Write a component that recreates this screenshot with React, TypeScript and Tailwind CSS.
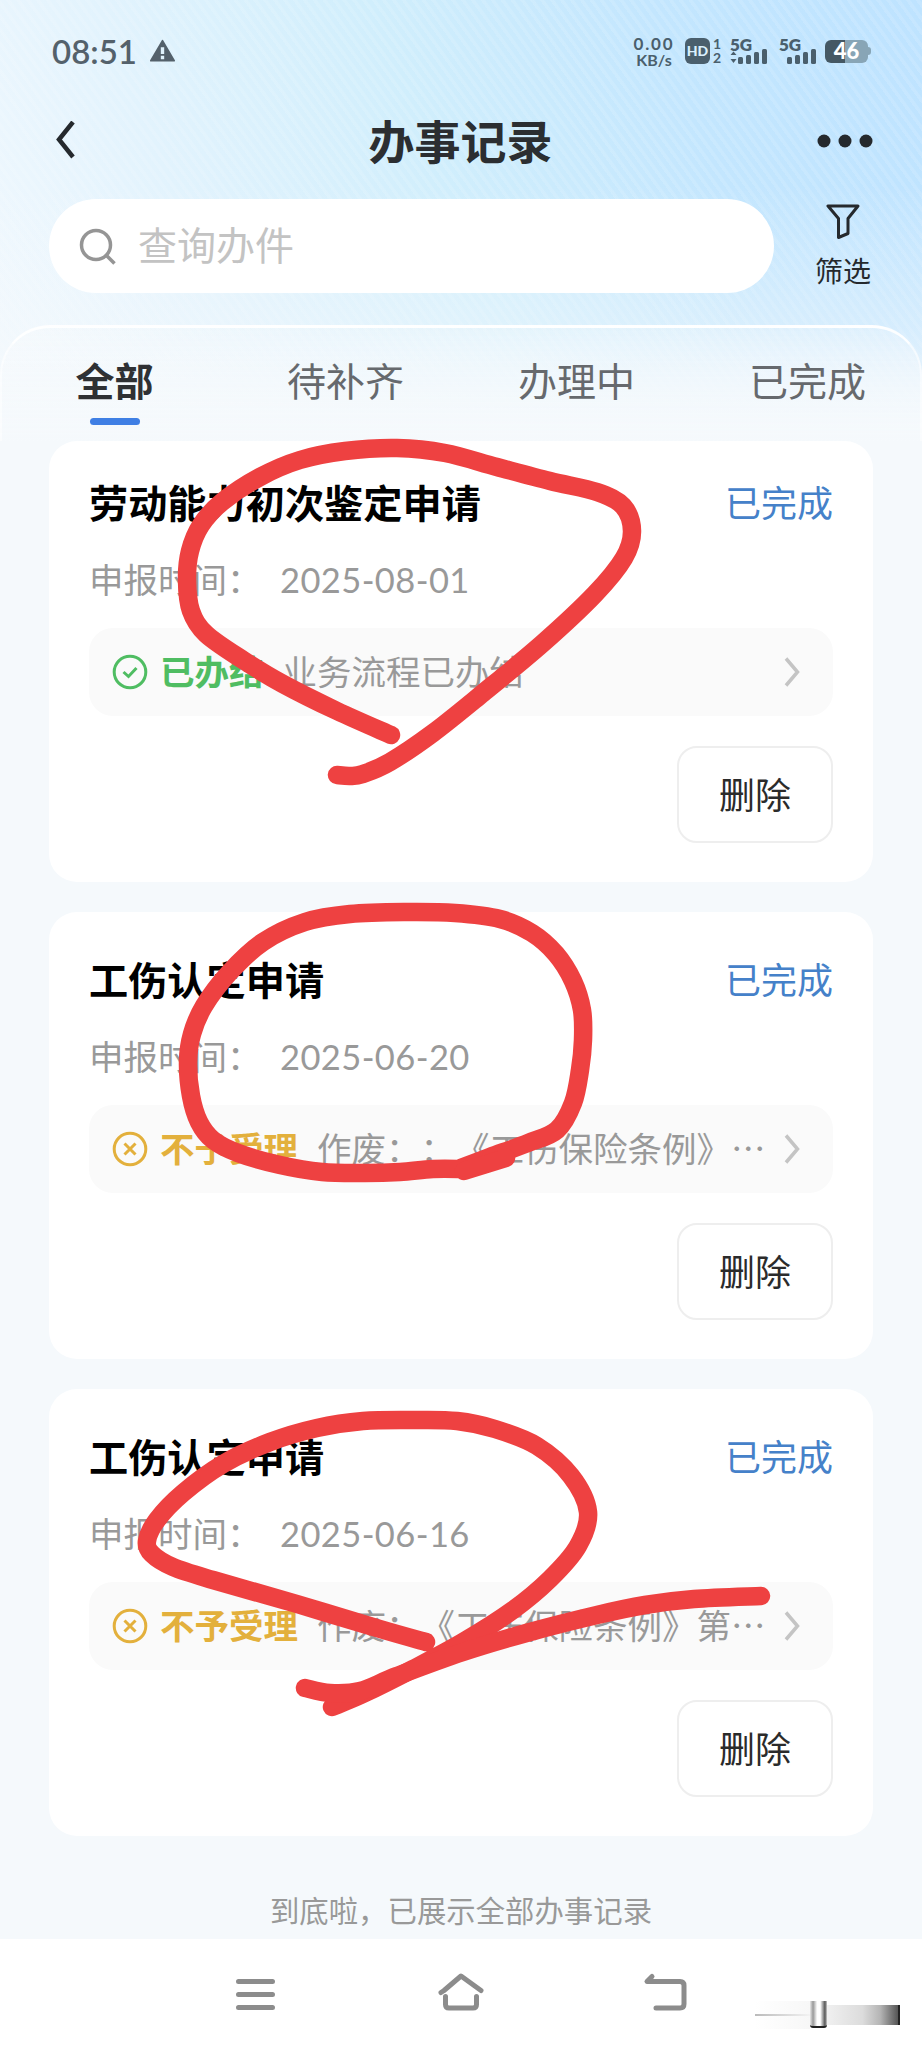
import { ReactNode } from 'react';

type Point = [number, number];

interface ServiceRecord {
  id: number;
  title: string;
  date: string;
  result: 'done' | 'rejected';
  resultText: string;
  detail: string;
}

const TABS = ['全部', '待补齐', '办理中', '已完成'];

const RECORDS: ServiceRecord[] = [
  { id: 1, title: '劳动能力初次鉴定申请', date: '2025-08-01', result: 'done', resultText: '已办结', detail: '业务流程已办结' },
  { id: 2, title: '工伤认定申请', date: '2025-06-20', result: 'rejected', resultText: '不予受理', detail: '作废：：《工伤保险条例》…' },
  { id: 3, title: '工伤认定申请', date: '2025-06-16', result: 'rejected', resultText: '不予受理', detail: '作废：《工伤保险条例》第…' },
];

const STROKES: Point[][] = [
  [
    [391, 735], [337, 711], [283, 684], [243, 660], [206, 634], [191, 611], [187, 580], [190, 551], [201, 525],
    [222, 502], [260, 477], [300, 460], [345, 451], [397, 448], [445, 453], [497, 467], [550, 481], [597, 492],
    [623, 506], [632, 531], [624, 558], [595, 594], [543, 643], [483, 693], [433, 733], [390, 762], [363, 774],
    [350, 776], [337, 775],
  ],
  [
    [464, 1169], [433, 1169], [400, 1172], [365, 1173], [322, 1172], [280, 1165], [238, 1153], [213, 1140], [199, 1122],
    [191, 1096], [188, 1062], [192, 1034], [204, 1006], [229, 973], [263, 942], [305, 922], [350, 914], [405, 912],
    [455, 913], [500, 919], [532, 933], [556, 954], [573, 981], [582, 1010], [583, 1040], [580, 1070], [573, 1103],
    [557, 1130], [528, 1143], [490, 1157], [461, 1168],
  ],
  [[506, 1158], [464, 1171]],
  [
    [426, 1642], [380, 1629], [297, 1604], [213, 1580], [173, 1567], [152, 1554], [147, 1541], [157, 1520], [183, 1493],
    [223, 1464], [270, 1442], [317, 1428], [363, 1421], [413, 1420], [457, 1421], [495, 1429], [537, 1446], [571, 1476],
    [588, 1512], [578, 1546], [550, 1579], [513, 1610], [463, 1642], [413, 1669], [363, 1694], [332, 1707],
  ],
  [[305, 1688], [330, 1693], [360, 1691], [397, 1676], [463, 1652], [530, 1632], [597, 1615], [645, 1605], [694, 1599], [761, 1596]],
];

// Catmull-Rom through every point, so a freehand line stays round
function smoothPath(pts: Point[]): string {
  let d = `M${pts[0][0]} ${pts[0][1]}`;
  for (let i = 0; i < pts.length - 1; i++) {
    const p0 = pts[i - 1] || pts[i];
    const p1 = pts[i];
    const p2 = pts[i + 1];
    const p3 = pts[i + 2] || p2;
    d += ` C${p1[0] + (p2[0] - p0[0]) / 6} ${p1[1] + (p2[1] - p0[1]) / 6} ${p2[0] - (p3[0] - p1[0]) / 6} ${p2[1] - (p3[1] - p1[1]) / 6} ${p2[0]} ${p2[1]}`;
  }
  return d;
}

function SignalBars({ arrows }: { arrows?: boolean }) {
  return (
    <svg className="w-[40px] h-[40px] shrink-0" viewBox="-1 -6 40 40" fill="#4a5f6d">
      <text x="0" y="13.500" fontSize="17" fontWeight="800" className="font-['Lato']">5G</text>
      {arrows && <path d="M0.500 18h6L3.500 14.500zM0.500 22h6L3.500 26z" />}
      <rect x="8" y="20" width="5" height="7" rx="1.500" />
      <rect x="16" y="18" width="5" height="9" rx="1.500" />
      <rect x="24" y="15" width="5" height="12" rx="1.500" />
      <rect x="32" y="12" width="5" height="15" rx="1.500" />
    </svg>
  );
}

function StatusBar() {
  return (
    <div className="h-[102px] pl-[52px] pr-[51px] flex items-center justify-between text-[#4a5f6d] font-['Lato','Noto_Sans_CJK_SC',sans-serif]">
      <div className="flex items-center gap-[12px]">
        <span className="text-[33px] leading-none font-semibold text-[#54616b]">08:51</span>
        <svg className="w-[27px] h-[24px]" viewBox="0 0 28 24">
          <path d="M14 1.500L26 22H2z" fill="#54616b" stroke="#54616b" strokeWidth="2" strokeLinejoin="round" />
          <path d="M14 8v7M14 17v3.500" stroke="#e0f2fc" strokeWidth="3.500" />
        </svg>
      </div>
      <div className="flex items-center">
        <div className="w-[44px] flex flex-col items-center font-bold">
          <span className="text-[17px] leading-[17px] tracking-[1.800px]">0.00</span>
          <span className="text-[16px] leading-[16px]">KB/s</span>
        </div>
        <div className="ml-[9px] w-[25px] h-[26px] rounded-[6px] bg-[#4a5f6d] text-[#d9effd] text-[14px] leading-none font-black flex items-center justify-center">HD</div>
        <div className="ml-[2px] w-[10px] flex flex-col items-center text-[14px] leading-[14px] font-bold">
          <span>1</span>
          <span>2</span>
        </div>
        <div className="ml-[7px] flex gap-[9px]">
          <SignalBars arrows />
          <SignalBars />
        </div>
        <div className="ml-[7px] flex items-center">
          <div className="w-[43px] h-[23px] rounded-[6px] bg-linear-to-r from-[#455864] from-46% to-[#88a5b6] to-46% text-white text-[22px] leading-none font-black flex items-center justify-center">46</div>
          <div className="w-[3px] h-[8px] rounded-r-sm bg-[#88a5b6]" />
        </div>
      </div>
    </div>
  );
}

function TitleBar() {
  return (
    <div className="h-[78px] pl-[54px] pr-[49px] flex items-center justify-between text-[#25292d]">
      <svg className="w-[50px] h-[40px]" viewBox="0 0 50 40" fill="none" stroke="currentColor" strokeWidth="4.500">
        <path d="M19 1L5 18.500L19 36" />
      </svg>
      <h1 className="pb-[5px] text-[46px] leading-none font-bold text-[#2b2e31]">办事记录</h1>
      <svg className="w-[56px] h-[14px]" viewBox="0 0 56 14" fill="currentColor">
        <circle cx="7" cy="7" r="6.500" />
        <circle cx="28" cy="7" r="6.500" />
        <circle cx="49" cy="7" r="6.500" />
      </svg>
    </div>
  );
}

function SearchRow() {
  return (
    <div className="mt-[19px] pl-[49px] pr-[49px] flex justify-between">
      <div className="w-[725px] h-[94px] rounded-full bg-white pl-[30px] flex items-center">
        <svg className="w-[37px] h-[37px]" viewBox="0 0 37 37" fill="none" stroke="#959595" strokeWidth="3.500">
          <circle cx="17" cy="17" r="14.500" />
          <path d="M26.500 26.500L35.500 35.500" />
        </svg>
        <span className="ml-[22px] pb-[5px] text-[39px] leading-none text-[#c3c3c3]">查询办件</span>
      </div>
      <button className="w-[60px] flex flex-col items-center pt-[5px] text-[#25292d]">
        <svg className="w-[34px] h-[36px]" viewBox="0 0 34 36" fill="none" stroke="currentColor" strokeWidth="3" strokeLinejoin="round">
          <path d="M2 2H32L22 14.500V29.500L12.500 33.500V14.500Z" />
        </svg>
        <span className="mt-[16px] text-[28px] leading-none whitespace-nowrap">筛选</span>
      </button>
    </div>
  );
}

function ResultIcon({ result }: { result: ServiceRecord['result'] }) {
  return (
    <svg className="w-[36px] h-[36px] shrink-0" viewBox="0 0 36 36" fill="none" stroke="currentColor" strokeWidth="3">
      <circle cx="18" cy="18" r="15.800" />
      {result === 'done' ? <path d="M11.500 18L16.500 22.500L24.500 14" /> : <path d="M12.500 12.500L23.500 23.500M23.500 12.500L12.500 23.500" />}
    </svg>
  );
}

function RecordCard({ record, first }: { record: ServiceRecord; first: boolean }) {
  return (
    <div className={`bg-white rounded-[28px] px-[40px] pb-[39px] ${first ? 'pt-[37px]' : 'pt-[43px]'}`}>
      <div className="h-[50px] pb-[3px] flex items-center justify-between">
        <h2 className="text-[39.200px] leading-none font-bold text-black">{record.title}</h2>
        <span className="pb-px text-[36px] leading-none text-[#4581c9]">已完成</span>
      </div>
      <div className="mt-[27px] h-[50px] flex items-center text-[34.500px] leading-none text-[#999]">
        <span className="w-[191px] pb-[3px] whitespace-nowrap">申报时间：</span>
        <span className="font-['Lato'] tracking-[0.400px]">{record.date}</span>
      </div>
      <div className="mt-[23px] h-[88px] rounded-[24px] bg-[#fafafa] pl-[23px] pr-[32px] flex items-center text-[34.500px] leading-none whitespace-nowrap">
        <div className={`flex items-center gap-[12px] ${record.result === 'done' ? 'text-[#4fbd62]' : 'text-[#e3b03c]'}`}>
          <ResultIcon result={record.result} />
          <span className="pb-[4px] font-bold">{record.resultText}</span>
        </div>
        <span className="ml-[19px] pb-[4px] text-[#999] [text-spacing-trim:space-all]">{record.detail}</span>
        <svg className="ml-auto w-[18px] h-[30px] shrink-0" viewBox="0 0 18 30" fill="none" stroke="#c4c4c4" strokeWidth="3.500">
          <path d="M3 1.500L14.500 15L3 28.500" />
        </svg>
      </div>
      <div className="mt-[30px] flex justify-end">
        <button className="w-[156px] h-[97px] pb-[4px] rounded-[20px] border-2 border-[#eee] text-[36px] leading-none text-[#2b2b2b]">删除</button>
      </div>
    </div>
  );
}

function NavIcon({ children }: { children: ReactNode }) {
  return (
    <svg className="w-[52px] h-[40px]" viewBox="0 0 52 40" fill="none" stroke="#8c8c8c" strokeWidth="5" strokeLinecap="round" strokeLinejoin="round">
      {children}
    </svg>
  );
}

function NavBar() {
  return (
    <div className="h-[109px] bg-white pl-[230px] pt-[33px] flex">
      <NavIcon><path d="M8.500 9.500H42.500M8.500 22.500H42.500M8.500 35.500H42.500" /></NavIcon>
      <div className="ml-[153px]">
        <NavIcon><path d="M9 18.500L26 4L46 18.500M9 18.500L6 20.500M10.500 24.500V32.500Q10.500 36 14 36H38Q41.500 36 41.500 32.500V24.500" /></NavIcon>
      </div>
      <div className="ml-[153px]">
        <NavIcon><path d="M12 4.500L7 9.500H40Q44 9.500 44 13.500V32Q44 36 40 36H16" /></NavIcon>
      </div>
      <div className="ml-[63px] mt-[29px] w-[148px] h-[32px] flex">
        <div className="w-[55px] h-[28px] flex items-center bg-linear-to-r from-white to-[#f7f7f7]">
          <div className="w-full h-[2px] bg-linear-to-r from-[#bbb] to-[#f3f3f3]" />
        </div>
        <div className="w-[17px] h-[27px] rounded-b-[3px] border-b-2 border-[#222] bg-[linear-gradient(90deg,#e8e8e8,#999_18%,#fff_42%,#fff_60%,#555_88%,#ccc)]" />
        <div className="mt-[4px] w-[73px] h-[20px] border-r-2 border-[#222] bg-[linear-gradient(90deg,#f0f0f0,#dcdcdc_50%,#b5b5b5_75%,#555)]" />
      </div>
    </div>
  );
}

export default function App() {
  return (
    <div className="relative w-[922px] h-[2048px] overflow-hidden flex flex-col bg-[#f5f9fc] font-['Noto_Sans_CJK_SC',sans-serif]">
      <div className="bg-[linear-gradient(180deg,rgba(245,249,252,0)_0%,rgba(245,249,252,0)_42%,rgba(245,249,252,0.4)_74%,#f5f9fc_100%),repeating-linear-gradient(54deg,rgba(255,255,255,0.12)_0px,rgba(255,255,255,0.12)_3px,transparent_4px,transparent_8px),linear-gradient(68deg,#f3f9fe_0%,#e2f3fd_25%,#d0eefc_50%,#c3e6fe_75%,#bee3ff_100%)]">
        <StatusBar />
        <TitleBar />
        <SearchRow />
        <div className="mt-[32px] h-[116px] rounded-t-[50px] border-t-[3px] border-x-2 border-t-white/90 border-x-white/50 bg-linear-to-b from-white/20 to-[#f5f9fc]">
          <div className="-mx-[3px] grid grid-cols-4">
            {TABS.map((tab, i) => (
              <div key={tab} className="flex flex-col items-center pt-[31px]">
                <span className={`text-[39px] leading-[40px] ${i === 0 ? 'font-bold text-[#2f3134]' : 'text-[#66696d]'}`}>{tab}</span>
                {i === 0 && <div className="mt-[19px] w-[50px] h-[7px] rounded-full bg-[#3f7fe4]" />}
              </div>
            ))}
          </div>
        </div>
      </div>
      <div className="px-[49px] flex flex-col gap-[30px]">
        {RECORDS.map((record, i) => <RecordCard key={record.id} record={record} first={i === 0} />)}
      </div>
      <p className="grow flex items-center justify-center pt-[44px] text-[29.400px] leading-none text-[#999]">到底啦，已展示全部办事记录</p>
      <NavBar />
      {/* pen marks lie over the whole page */}
      <svg className="absolute inset-0 w-full h-full pointer-events-none" viewBox="0 0 922 2048" fill="none" stroke="#ee4141" strokeWidth="18.500" strokeLinecap="round" strokeLinejoin="round">
        {STROKES.map((pts, i) => <path key={i} d={smoothPath(pts)} />)}
      </svg>
    </div>
  );
}
